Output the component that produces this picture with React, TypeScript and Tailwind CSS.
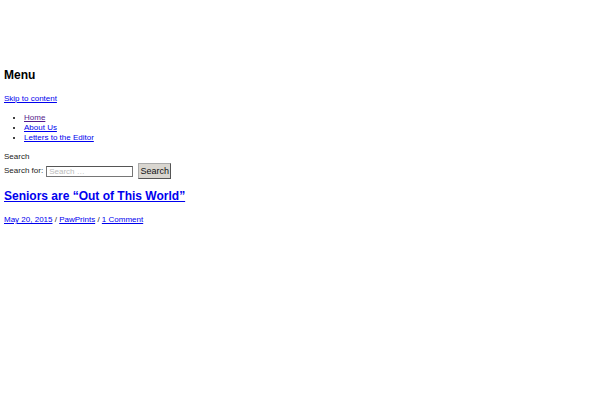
export default function App() {
  return (
    <div className="w-[600px] h-[400px] bg-white text-black overflow-hidden" style={{ fontFamily: '"Liberation Sans", Arial, sans-serif' }}>
      <div className="pt-[67px] px-[4px]">
        <h2 className="text-[12px] font-bold leading-[16px] m-0">Menu</h2>
        <div className="mt-[11px] text-[8px] leading-[10px]">
          <a href="#" className="text-[#0000ee] underline">Skip to content</a>
        </div>
        <ul className="mt-[9px] pl-[20px] list-disc text-[8px] leading-[10px]">
          <li><a href="#" className="text-[#551a8b] underline">Home</a></li>
          <li><a href="#" className="text-[#0000ee] underline">About Us</a></li>
          <li><a href="#" className="text-[#0000ee] underline">Letters to the Editor</a></li>
        </ul>
        <div className="mt-[9px] text-[8px] leading-[10px] text-[#222]">Search</div>
        <div className="mt-[1px] flex items-center text-[8px] leading-[10px]">
          <span className="text-[#222]">Search for:</span>
          <input
            className="ml-[3px] w-[87px] h-[11px] border border-[#767676] border-t-[#555] px-[2px] text-[8px] leading-[8px] placeholder:text-[#bbb] outline-none"
            placeholder="Search …"
          />
          <button className="ml-[5px] h-[16px] w-[33px] bg-[#d9d6d0] border border-[#aaa] border-r-[#555] border-b-[#555] text-[9px] leading-[12px] text-[#111]">Search</button>
        </div>
        <h1 className="mt-[9px] text-[12px] font-bold leading-[16px]">
          <a href="#" className="text-[#0000ee] underline">Seniors are “Out of This World”</a>
        </h1>
        <div className="mt-[11px] text-[8px] leading-[10px] text-[#222]">
          <a href="#" className="text-[#0000ee] underline">May 20, 2015</a>
          <span> / </span>
          <a href="#" className="text-[#0000ee] underline">PawPrints</a>
          <span> / </span>
          <a href="#" className="text-[#0000ee] underline">1 Comment</a>
        </div>
      </div>
    </div>
  );
}
